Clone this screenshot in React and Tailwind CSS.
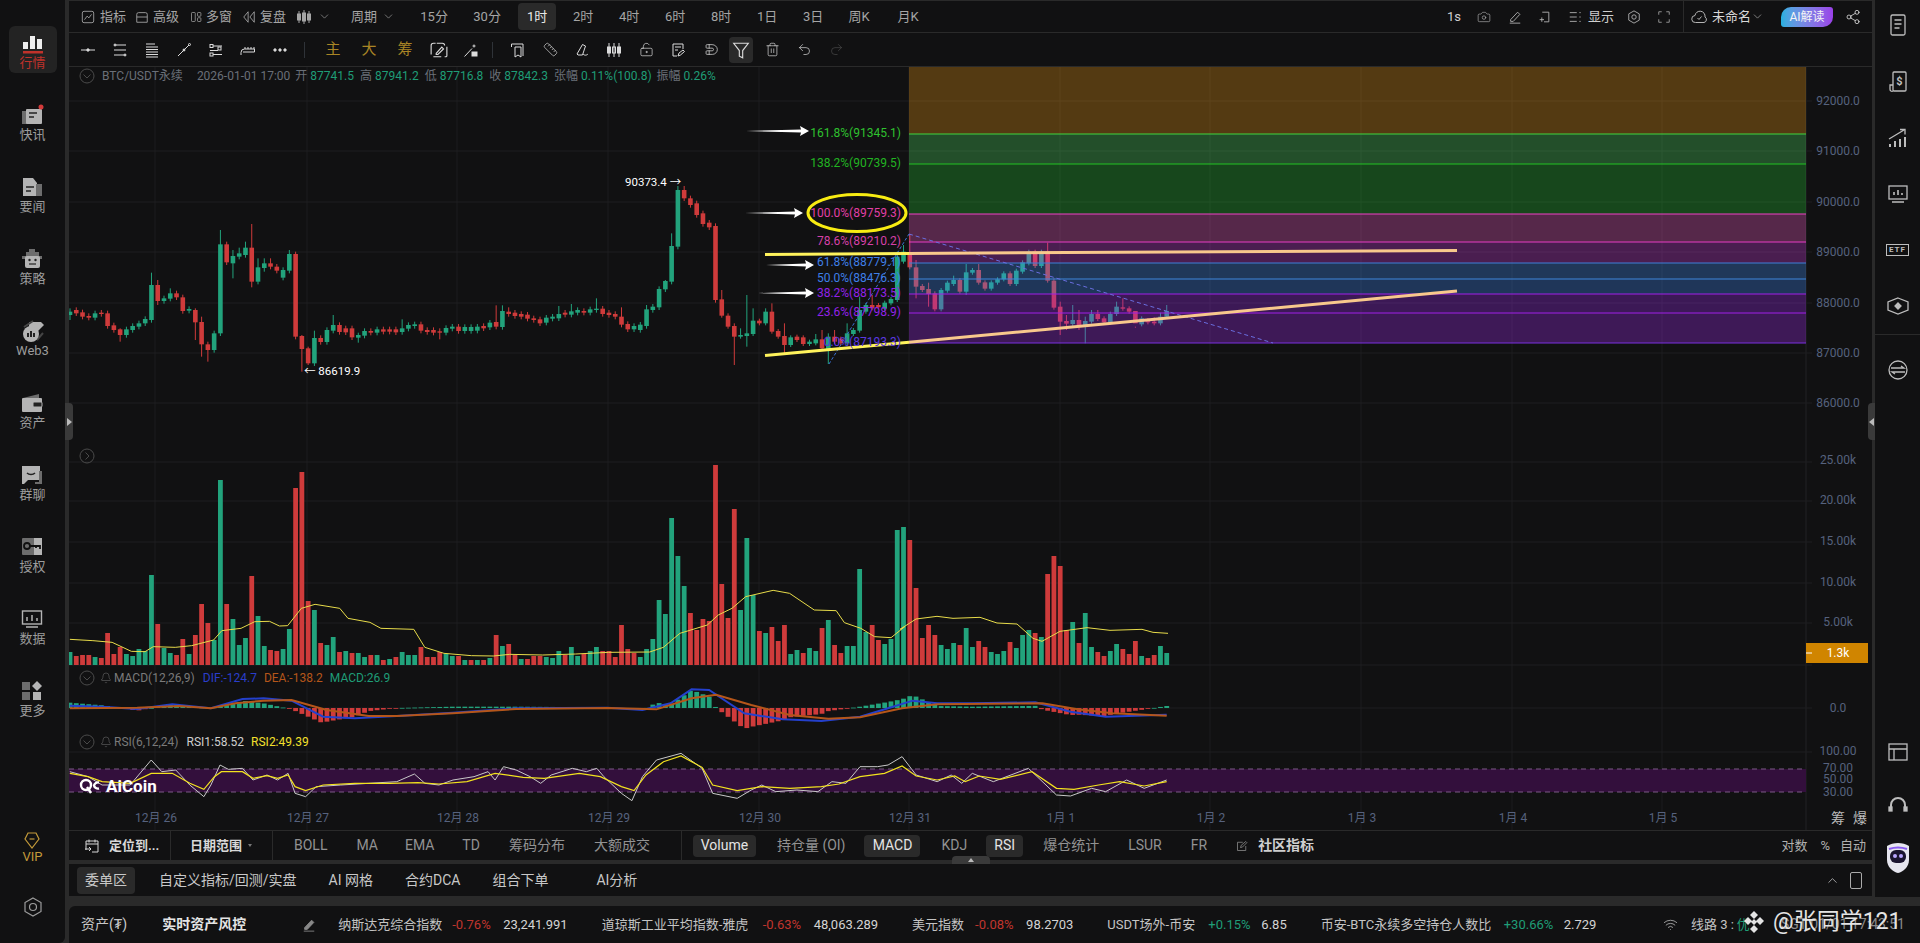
import React from "react";
import { Camera, Trash2, Undo2, Redo2, ChevronDown, ChevronUp, Ruler, LockKeyholeOpen, Share2, Bell, Wifi, Magnet } from "lucide-react";

const G = "#22a37c", R = "#cf3b3b";
const X = (i) => 70 + 6.267 * i;
const VG = [155, 307, 457, 608, 759, 909, 1060, 1210, 1361, 1512, 1662];

// [top, bottom, colour(0 green, 1 red), high, low] read from the picture
const A = [[335,345,0,325,360],[330,340,1],[337,350,1],[348,353,1],[340,353,0],[338,342,1,330],[340,378,1],[376,390,1],[388,405,1,385,425],[388,405,0],[378,390,0],[370,380,0],[357,370,0],[255,360,0,218],[255,303,1,240,315],[295,303,0],[280,296,0,265],[280,292,1],[292,333,1],[327,332,0],[330,367,1,325,420],[366,433,1,350,470],[433,450,1,425,485],[400,450,0],[133,400,0,90],[133,187,1,125],[168,190,0,150,235],[160,170,0,143],[143,165,0,125],[143,245,1,72,262],[202,245,0,175],[190,204,0,175,215],[190,200,1,175],[200,212,1],[210,233,0],[162,212,0,150],[162,410,1,155],[408,447,1,405,515],[445,490,1,440,495],[414,490,0,392],[414,426,1],[390,426,0],[375,392,0,345],[375,396,1],[385,397,1],[385,412,1],[405,413,0,398,428],[393,407,0],[393,398,1],[388,398,0],[388,395,1],[388,395,1],[388,397,1],[385,396,0,358],[375,386,0],[373,378,0],[373,392,1],[390,396,1],[390,398,1],[394,398,1,385,418],[384,398,0],[380,386,0],[380,393,1],[381,393,0],[381,393,0],[380,392,0],[378,385,1],[368,382,0],[366,380,1,316],[333,381,0,316],[335,342,1,322],[338,348,1],[342,350,1],[344,356,1],[355,360,1],[358,370,1],[353,368,0],[350,356,0],[342,355,0,318],[338,344,1],[334,344,0,312],[330,338,0],[333,338,1],[328,338,0],[326,330,0,295],[326,342,1,318],[338,345,1],[342,350,1],[350,374,1,322],[372,388,1],[378,388,0],[374,390,0],[328,378,0,315],[320,330,0],[267,322,0],[243,268,0,240],[138,245,0,100],[-30,140,0,-42,148],[-30,-5,1,-42],[-5,15,1],[10,45,1],[40,72,1,32],[68,82,1],[78,300,1]];
// same for the second part of the run, other scale
const B = [[568,617,1,540],[617,650,1,610],[648,680,1,640,765],[675,680,0,655],[670,678,0,555,710],[632,672,0,595],[632,640,1],[605,640,0,595],[605,665,1,580],[663,680,1],[678,705,1,640,730],[682,705,0],[680,690,1],[682,702,1],[695,702,0],[688,700,0,672],[688,715,1,660],[680,720,0,670,762],[680,695,1,660],[686,700,1],[670,700,0,640],[660,672,0],[600,662,0,560],[585,605,0],[585,595,1,555],[585,592,1],[578,596,0],[567,580,0],[440,570,0,425],[425,455,0,405],[430,472,1,372],[472,530,1,450,565],[528,540,1],[537,552,1,518,590],[550,598,1],[540,598,0],[518,542,0],[510,522,0,497],[510,545,1],[487,545,0,462,555],[480,488,0],[480,518,1,462],[517,536,1],[517,536,0],[508,518,0],[490,508,0],[490,522,1],[482,522,0],[457,485,0],[425,460,0],[425,468,1],[425,468,0],[425,512,1,398],[512,593,1,505],[590,635,1,575,675],[633,641,1,615,660],[630,642,0,585],[630,645,1,600,660],[633,645,0,620,700],[612,635,0,600],[612,627,1,600],[625,637,1],[612,637,0,605],[590,612,0,575],[592,596,1,565],[595,605,1],[603,640,1,650],[625,643,0],[630,637,1],[635,640,1,622],[620,640,0,608],[603,620,0,585]];
const Candles = [
  ...A.map(([t, b, c, h, l]) => [200 + t / 3, 200 + b / 3, c, 200 + (h ?? t - 8) / 3, 200 + (l ?? b + 8) / 3]),
  ...B.map(([t, b, c, h, l]) => [110 + t / 3, 110 + b / 3, c, 110 + (h ?? t - 6) / 3, 110 + (l && l > b ? l : b + 6) / 3]),
];
const V = [[636,0],[648,1],[645,1],[645,1],[651,0],[654,1],[579,1],[642,1],[621,1],[642,0],[648,0],[627,0],[633,0],[405,0],[552,1],[624,0],[639,0],[645,1],[597,1],[642,0],[585,1],[492,1],[549,1],[600,0],[120,0],[492,1],[537,0],[615,0],[594,0],[408,1],[528,0],[618,0],[630,1],[633,1],[627,0],[567,0],[144,1],[96,1],[483,1],[510,0],[609,1],[615,0],[591,0],[636,1],[633,0],[639,1],[639,0],[651,0],[645,1],[645,0],[660,1],[657,0],[651,1],[636,0],[645,0],[645,0],[621,1],[651,1],[651,1],[636,1],[642,0],[648,0],[648,1],[660,0],[660,1],[660,0],[660,1],[654,0],[585,1],[618,0],[612,1],[645,1],[657,0],[657,1],[648,1],[648,1],[651,0],[654,0],[633,0],[645,1],[621,0],[648,0],[642,1],[633,0],[621,0],[633,1],[633,1],[651,1],[555,1],[627,1],[639,1],[651,0],[627,0],[597,0],[480,0],[522,0],[234,0],[348,0],[438,0],[519,1],[570,1],[537,1],[543,1],[75,1],[432,1],[534,1],[207,1],[510,0],[294,0],[465,0],[573,1],[579,0],[561,1],[603,1],[555,1],[642,0],[630,0],[639,1],[624,0],[633,0],[564,1],[540,0],[615,1],[639,1],[618,0],[618,0],[387,0],[576,0],[555,1],[600,1],[612,0],[597,0],[270,0],[261,0],[300,1],[444,1],[594,1],[555,1],[585,1],[615,0],[627,0],[609,0],[615,1],[564,0],[621,0],[603,1],[621,1],[636,0],[642,0],[633,0],[606,1],[624,0],[585,0],[570,0],[579,1],[591,0],[402,1],[348,1],[378,1],[570,1],[546,0],[609,1],[519,0],[621,0],[636,1],[648,1],[633,0],[612,0],[627,1],[642,1],[603,1],[648,0],[654,1],[645,1],[618,0],[639,0]];
const MA = [[18,598],[60,602],[95,607],[130,634],[155,635],[170,620],[210,622],[240,617],[280,600],[295,572],[330,565],[355,545],[382,544],[400,558],[415,557],[440,505],[465,493],[510,505],[525,535],[565,547],[585,565],[645,568],[665,622],[700,640],[750,647],[790,648],[820,643],[880,645],[940,642],[1000,637],[1075,636],[1100,622],[1130,580],[1180,555],[1200,525],[1225,505],[1250,470],[1300,451],[1330,460],[1375,510],[1415,512],[1430,548],[1460,565],[1485,590],[1515,593],[1540,560]].map(([x, y]) => [60 + x / 1.823, 440 + y / 3]).concat([[900,568],[916,537],[937,529],[953,535],[980,532],[997,549],[1017,552],[1033,595],[1042,604],[1060,574],[1087,563],[1110,571],[1142,568],[1153,577],[1168,580]].map(([x, y]) => [x, 440 + y / 3]));
const DIF = [[14,137],[60,140],[110,147],[160,133],[215,145],[260,117],[290,115],[330,122],[375,170],[420,175],[480,168],[560,158],[650,145],[780,143],[830,150],[870,130],[900,88],[925,90],[975,160],[1030,178],[1085,183],[1140,170],[1180,145],[1215,122],[1250,130],[1300,130],[1390,127],[1440,155],[1490,170],[1577,164]];
const DEA = [[14,145],[110,143],[170,138],[215,145],[250,130],[290,122],[330,120],[380,150],[440,168],[480,168],[560,160],[650,147],[780,144],[850,148],[900,115],[935,104],[985,135],[1040,165],[1095,176],[1140,172],[1200,145],[1250,133],[1400,130],[1450,148],[1500,160],[1577,167]];
const R1 = [[14,335],[40,350],[60,375],[100,375],[130,300],[145,335],[165,330],[185,375],[205,410],[215,375],[228,315],[240,328],[260,325],[275,360],[295,345],[310,360],[325,340],[335,400],[350,410],[365,380],[400,375],[440,370],[480,365],[505,342],[520,370],[540,375],[560,360],[590,350],[610,335],[620,360],[632,320],[650,330],[670,350],[685,370],[700,345],[730,325],[750,335],[765,325],[775,350],[800,400],[815,422],[830,350],[850,300],[885,280],[915,325],[930,400],[965,415],[985,390],[1000,375],[1020,395],[1050,390],[1080,395],[1100,365],[1120,370],[1140,320],[1165,320],[1180,315],[1200,290],[1220,345],[1250,365],[1270,345],[1285,370],[1300,340],[1330,365],[1380,325],[1420,405],[1440,408],[1470,385],[1490,395],[1520,360],[1545,385],[1577,360]];
const R2 = [[14,340],[40,350],[60,365],[100,370],[130,340],[160,340],[185,370],[205,388],[220,350],[230,335],[260,335],[275,355],[295,347],[310,355],[325,345],[335,380],[350,392],[375,375],[420,370],[470,370],[510,368],[540,372],[580,365],[620,340],[660,352],[690,355],[740,340],[770,350],[800,380],[818,392],[835,345],[860,305],[885,288],[915,322],[930,375],[965,392],[1000,380],[1040,385],[1085,380],[1110,372],[1140,350],[1175,340],[1200,318],[1220,348],[1250,360],[1275,348],[1290,365],[1310,348],[1340,358],[1385,335],[1420,385],[1445,388],[1480,375],[1510,365],[1545,378],[1577,365]];
const z9 = ([x, y]) => [60 + x / 1.425, 660 + y / 3];
const pts = (a) => a.map((p) => p.join(",")).join(" ");
const lerp = (a, vx) => {
  for (let i = 1; i < a.length; i++) if (vx <= a[i][0]) { const t = (vx - a[i - 1][0]) / (a[i][0] - a[i - 1][0]); return a[i - 1][1] + t * (a[i][1] - a[i - 1][1]); }
  return a[a.length - 1][1];
};

const BANDS = [
  [67, 134, "#f39a14"], [134, 164, "#50e064"], [164, 214, "#28c836"], [214, 242, "#fa61cc"], [242, 263, "#cf40e0"],
  [263, 279, "#4696ff"], [279, 294, "#4290ff"], [294, 313, "#a32ff4"], [313, 343, "#aa2ffa"],
];
const LEVELS = [
  [134, "#3fd63f", "161.8%(91345.1)", "#2fc22f"], [164, "#22c422", "138.2%(90739.5)", "#22b522"], [214, "#ee40c4", "100.0%(89759.3)", "#e23fa6"],
  [242, "#e83cc4", "78.6%(89210.2)", "#d640a8"], [263, "#3f7fd8", "61.8%(88779.1)", "#3f7fe8"], [279, "#3f86dc", "50.0%(88476.3)", "#3f7fe8"],
  [294, "#a020e8", "38.2%(88173.5)", "#9322e8"], [313, "#a020e8", "23.6%(87798.9)", "#9322e8"], [343, "#7a30e0", "0.0%(87193.3)", "#5b38e0"],
];

const Pane = ({ y, h, children }) => (
  <svg width="1803" height={h} viewBox={`69 ${y} 1803 ${h}`} className="block">
    {VG.map((x) => <line key={x} x1={x} x2={x} y1={y} y2={y + h} stroke="#1c1c1e" />)}
    <line x1="1806" x2="1806" y1={y} y2={y + h} stroke="#232325" />
    {children}
  </svg>
);
const HL = ({ y }) => <line x1="69" x2="1812" y1={y} y2={y} stroke="#1e1e20" />;
const Lab = ({ y, children, x = 1838 }) => <text x={x} y={y} textAnchor="middle" dominantBaseline="central" fontSize="12" fill="#56627e">{children}</text>;
const Arrow = ({ x1, x2, y }) => <polygon fill="#fff" points={`${x1},${y} ${x2 - 8},${y - 1.5} ${x2 - 9},${y - 5} ${x2},${y} ${x2 - 9},${y + 5} ${x2 - 8},${y + 1.5}`} />;

const Toggle = ({ open }) => (
  <svg width="16" height="16" viewBox="0 0 16 16" fill="none" stroke="#4a4a4a">
    <circle cx="8" cy="8" r="7" />
    <path d={open ? "M4.5 6.5 8 10l3.5-3.5" : "M6.5 4.5 10 8l-3.5 3.5"} />
  </svg>
);

const PriceChart = () => (
  <Pane y={67} h={378}>
    {[101, 151, 202, 252, 303, 353, 403].map((y) => <HL key={y} y={y} />)}
    {[["92000.0", 101], ["91000.0", 151], ["90000.0", 202], ["89000.0", 252], ["88000.0", 303], ["87000.0", 353], ["86000.0", 403]].map(([t, y]) => <Lab key={t} y={y}>{t}</Lab>)}
    {Candles.map(([t, b, c, h, l], i) => (
      <g key={i} fill={c ? R : G}>
        <rect x={X(i) - 0.5} y={h} width="1" height={Math.max(l - h, 1)} />
        <rect x={X(i) - 2.3} y={t} width="4.6" height={Math.max(b - t, 1)} />
      </g>
    ))}
    {BANDS.map(([a, b, c]) => <rect key={a} x="909" y={a} width="897" height={b - a} fill={c} fillOpacity="0.3" />)}
    {LEVELS.map(([y, c]) => <line key={y} x1="909" x2="1806" y1={y} y2={y} stroke={c} />)}
    <path d="M829 364 909 234" stroke="#3b73d8" strokeDasharray="3 2" fill="none" />
    <path d="M909 234 1273 343" stroke="#6a6ee0" strokeDasharray="4 3" fill="none" />
    <path d="M765 254.5 909 253.4" stroke="#fff35c" strokeWidth="3" />
    <path d="M909 253.4 1457 250.5" stroke="#f8c88c" strokeWidth="3" />
    <path d="M765 355.6 909 342.3" stroke="#fff35c" strokeWidth="3" />
    <path d="M909 342.3 1457 291" stroke="#f8c88c" strokeWidth="3" />
    {LEVELS.map(([y, , t, c]) => <text key={t} x="901" y={y - 1} textAnchor="end" dominantBaseline="central" fontSize="12" fill={c}>{t}</text>)}
    <ellipse cx="857" cy="213" rx="49" ry="18.5" fill="none" stroke="#f8ec12" strokeWidth="3" />
    <Arrow x1={746} x2={809} y={131} />
    <Arrow x1={745} x2={803} y={213} />
    <Arrow x1={766} x2={814} y={265} />
    <Arrow x1={758} x2={814} y={293} />
    <text x="625" y="182" dominantBaseline="central" fontSize="11.5" fill="#fff">90373.4 →</text>
    <text x="304" y="371" dominantBaseline="central" fontSize="11.5" fill="#fff">← 86619.9</text>
  </Pane>
);

const VolumeChart = () => (
  <Pane y={445} h={225}>
    {[462, 501, 542, 583, 623, 665].map((y) => <HL key={y} y={y} />)}
    {[["25.00k", 460], ["20.00k", 500], ["15.00k", 541], ["10.00k", 582], ["5.00k", 622]].map(([t, y]) => <Lab key={t} y={y}>{t}</Lab>)}
    {V.map(([t, c], i) => <rect key={i} x={X(i) - 2.4} y={440 + t / 3} width="4.8" height={(675 - t) / 3} fill={c ? R : G} />)}
    <polyline points={pts(MA)} fill="none" stroke="#e8dc4a" />
    <rect x="1806" y="643" width="62" height="20" fill="#d08500" />
    <line x1="1806" x2="1812" y1="653" y2="653" stroke="#fff" />
    <text x="1838" y="653" textAnchor="middle" dominantBaseline="central" fontSize="12" fill="#fff">1.3k</text>
  </Pane>
);

const MacdChart = () => (
  <Pane y={670} h={63}>
    <HL y={708} />
    <Lab y={708}>0.0</Lab>
    {V.map((_, i) => {
      const vx = (X(i) - 60) * 1.425;
      const d = ((lerp(DEA, vx) - lerp(DIF, vx)) * 2) / 3;
      return <rect key={i} x={X(i) - 2.4} y={d > 0 ? 708 - d : 708} width="4.8" height={Math.max(Math.abs(d), 0.8)} fill={d > 0 ? G : R} />;
    })}
    <polyline points={pts(DIF.map(z9))} fill="none" stroke="#2440cc" strokeWidth="2" />
    <polyline points={pts(DEA.map(z9))} fill="none" stroke="#b5561a" strokeWidth="2" />
  </Pane>
);

const RsiChart = () => (
  <Pane y={733} h={72}>
    <HL y={752} />
    <rect x="69" y="769" width="1737" height="23" fill="#330f3c" />
    <line x1="69" x2="1806" y1="769" y2="769" stroke="#7d5a86" strokeDasharray="5 4" />
    <line x1="69" x2="1806" y1="792" y2="792" stroke="#7d5a86" strokeDasharray="5 4" />
    <Lab y={751}>100.00</Lab>
    <Lab y={768}>70.00</Lab>
    <Lab y={779}>50.00</Lab>
    <Lab y={792}>30.00</Lab>
    <polyline points={pts(R1.map(z9))} fill="none" stroke="#c8c8c8" />
    <polyline points={pts(R2.map(z9))} fill="none" stroke="#f2e21e" strokeWidth="1.2" />
  </Pane>
);

const XAxis = () => (
  <Pane y={805} h={25}>
    {["12月 26", "12月 27", "12月 28", "12月 29", "12月 30", "12月 31", "1月 1", "1月 2", "1月 3", "1月 4", "1月 5"].map((t, i) => <Lab key={t} x={VG[i] + 1} y={818}>{t}</Lab>)}
    <text x="1838" y="818" textAnchor="middle" dominantBaseline="central" fontSize="14" fill="#bbb">筹</text>
    <text x="1860" y="818" textAnchor="middle" dominantBaseline="central" fontSize="14" fill="#bbb">爆</text>
  </Pane>
);

const Ic = ({ s = 16, c = "", children, sw = 1 }) => (
  <svg width={s} height={s} viewBox="0 0 16 16" fill="none" stroke="currentColor" strokeWidth={sw} className={`shrink-0 ${c}`}>{children}</svg>
);

const Cell = ({ children }) => <span className="w-[32px] flex justify-center shrink-0 text-[#dcdcdc]">{children}</span>;

const Row1 = () => (
  <div className="h-[33px] border-t border-b border-[#2a2a2a] flex items-center text-[13px] text-[#a5a5a5] shrink-0">
    <Ic s={14} c="ml-[12px]"><rect x="1.5" y="1.5" width="13" height="13" rx="2" /><path d="m4 11 3-4 2 2 3-4" /></Ic>
    <span className="ml-[5px]">指标</span>
    <Ic s={14} c="ml-[9px]"><path d="M2 14V5a2 2 0 0 1 2-2h8a2 2 0 0 1 2 2v9zM2 8h12" /></Ic>
    <span className="ml-[4px]">高级</span>
    <Ic s={12} c="ml-[11px]"><rect x="2" y="2" width="5" height="12" rx="1" /><rect x="10" y="2" width="4.5" height="5" rx="1" /><rect x="10" y="9" width="4.5" height="5" rx="1" /></Ic>
    <span className="ml-[4px]">多窗</span>
    <Ic s={14} c="ml-[10px]"><path d="M7 2 2 8l5 6V2zM14 2 9 8l5 6V2z" /></Ic>
    <span className="ml-[4px]">复盘</span>
    <Ic s={16} c="ml-[10px]"><path d="M3 2v12M8 1v14M13 2v12" /><rect x="1.5" y="5" width="3" height="6" fill="currentColor" /><rect x="6.5" y="4" width="3" height="8" fill="currentColor" /><rect x="11.5" y="5" width="3" height="6" fill="currentColor" /></Ic>
    <ChevronDown size={13} strokeWidth={1.2} className="ml-[6px]" />
    <span className="ml-[20px]">周期</span>
    <ChevronDown size={13} strokeWidth={1.2} className="ml-[5px]" />
    <span className="ml-[16px] w-[46px] text-center">15分</span>
    <span className="ml-[7px] w-[46px] text-center">30分</span>
    <span className="ml-[8px] w-[38px] h-[27px] rounded bg-[#2a2a2a] text-[#e8e8e8] flex items-center justify-center">1时</span>
    <span className="ml-[4px] w-[46px] text-center">2时</span>
    <span className="w-[46px] text-center">4时</span>
    <span className="w-[46px] text-center">6时</span>
    <span className="w-[46px] text-center">8时</span>
    <span className="w-[46px] text-center">1日</span>
    <span className="w-[46px] text-center">3日</span>
    <span className="w-[46px] text-center">周K</span>
    <span className="ml-[3px] w-[46px] text-center">月K</span>
    <div className="ml-auto flex items-center h-full text-[#b5b5b5]">
      <span className="text-[#d0d0d0]">1s</span>
      <Camera size={14} strokeWidth={1.1} className="ml-[16px]" />
      <Ic s={14} c="ml-[17px]"><path d="M3 11 11 2.5l2.5 2.5L6 13H3zM2 15h12" /></Ic>
      <Ic s={14} c="ml-[15px]"><path d="M6 2.5h7.5v11H8M3 11h5M5.5 8.5v5" /></Ic>
      <Ic s={14} c="ml-[17px]"><path d="M2 3h8M2 8h8M2 13h8M13 3h1.5M13 8h1.5M13 13h1.5" /></Ic>
      <span className="ml-[6px] text-[#cfcfcf]">显示</span>
      <Ic s={14} c="ml-[13px]"><path d="m8 1 6 3.4v7.2L8 15l-6-3.4V4.4z" /><circle cx="8" cy="8" r="2.5" /></Ic>
      <Ic s={12} c="ml-[17px]"><path d="M1 5V1h4M11 1h4v4M15 11v4h-4M5 15H1v-4" /></Ic>
      <div className="ml-[13px] h-full border-l border-[#2a2a2a]" />
      <Ic s={16} c="ml-[7px]"><path d="M4.5 13.5a3.5 3.5 0 0 1-.5-7A5 5 0 0 1 14 8a3 3 0 0 1-1 5.5z" /><path d="m6.5 9 1.5 1.5 2.5-3" /></Ic>
      <span className="ml-[5px] text-[#d8d8d8]">未命名</span>
      <ChevronDown size={13} strokeWidth={1.2} />
      <span className="ml-[17px] w-[52px] h-[20px] rounded-tl-[10px] rounded-br-[10px] rounded-tr-[3px] rounded-bl-[3px] bg-gradient-to-r from-[#22b0e0] to-[#9a40e8] text-[#f4f4f4] text-[12px] flex items-center justify-center">AI解读</span>
      <Share2 size={16} strokeWidth={1.2} className="ml-[12px] mr-[11px] text-[#e0e0e0]" />
    </div>
  </div>
);

const Row2 = () => (
  <div className="h-[34px] border-b border-[#2a2a2a] flex items-center shrink-0">
    <div className="ml-[3px] flex items-center">
      <Cell><Ic><path d="M1 8h14" /><circle cx="8" cy="8" r="1.2" fill="currentColor" /></Ic></Cell>
      <Cell><Ic><path d="M2 3h12M2 8h12M2 13h12" /><circle cx="3" cy="3" r="1" /><circle cx="13" cy="13" r="1" /></Ic></Cell>
      <Cell><Ic><path d="M2 2h9M2 5h12M2 7.5h12M2 10h12M2 12.5h12M2 15h12" /></Ic></Cell>
      <Cell><Ic><path d="m2 14 11-11" /><circle cx="8" cy="8" r="1" fill="currentColor" /><circle cx="13.5" cy="2.5" r="1" /></Ic></Cell>
      <Cell><Ic><rect x="2" y="2.5" width="3" height="3" /><rect x="10" y="5" width="3" height="3" /><rect x="2" y="11" width="3" height="3" /><path d="M5 4h9M2 8.5h8M5 12.5h9" /></Ic></Cell>
      <Cell><Ic><path d="M1 13v-2.5A3.5 3.5 0 0 1 4.5 7h10v3H3" /><path d="M5 5v2M8 5v2M11 5v2M14 5v2" /></Ic></Cell>
      <Cell><Ic><circle cx="3" cy="8" r="1.2" fill="currentColor" /><circle cx="8" cy="8" r="1.2" fill="currentColor" /><circle cx="13" cy="8" r="1.2" fill="currentColor" /></Ic></Cell>
    </div>
    <div className="ml-[8px] w-px h-[16px] bg-[#2f3338]" />
    <span className="ml-[10px] w-[36px] text-center text-[15px] text-[#a98525]">主</span>
    <span className="w-[36px] text-center text-[15px] text-[#a98525]">大</span>
    <span className="w-[36px] text-center text-[15px] text-[#a98525]">筹</span>
    <Cell><Ic s={18}><path d="M5 2H3a2 2 0 0 0-2 2v8M13 14h1a1 1 0 0 0 1-1V5M3 14h7M6 2h5a2 2 0 0 1 2 2" /><path d="m5.5 11 5-5.5 1.5 1.5-5 5H5.5z" /></Ic></Cell>
    <Cell><Ic><path d="m1.5 14.5 7.5-8" /><circle cx="11" cy="4" r="1" /><rect x="9" y="10" width="5" height="4" fill="currentColor" /></Ic></Cell>
    <div className="ml-[5px] w-px h-[16px] bg-[#2f3338]" />
    <div className="ml-[9px] flex items-center">
      <Cell><Ic><path d="M1.5 5V2H13v12" /><path d="M5 5h6v10l-3-2-3 2z" /></Ic></Cell>
      <Cell><Ruler size={15} strokeWidth={1.1} /></Cell>
      <Cell><Ic><path d="m3 12 5.5-9.5 3 1.5-3 9H4z" /><path d="M9 12c2 2 4 1 5 0" /></Ic></Cell>
      <Cell><Ic><path d="M3 1v14M8 1v14M13 1v14" /><rect x="1.5" y="5" width="3" height="6" fill="currentColor" /><rect x="6.5" y="5" width="3" height="6" /><rect x="11.5" y="5" width="3" height="6" fill="currentColor" /></Ic></Cell>
      <Cell><LockKeyholeOpen size={15} strokeWidth={1.1} /></Cell>
      <Cell><Ic><path d="M13 7V2H3v12h4" /><path d="M5 5h6M5 8h3M8 14l1-3 4-3 1.5 1.5-4 3.5z" /></Ic></Cell>
      <Cell><Magnet size={15} strokeWidth={1.1} className="rotate-[45deg]" /></Cell>
    </div>
    <span className="ml-[3px] w-[24px] h-[26px] rounded bg-[#2a2a2a] text-[#dcdcdc] flex items-center justify-center">
      <Ic s={18}><path d="M1.5 2h13L9.5 8.5V15l-3-1.5v-5z" /></Ic>
    </span>
    <div className="ml-[3px] flex items-center">
      <Cell><Trash2 size={15} strokeWidth={1.1} /></Cell>
      <Cell><Undo2 size={15} strokeWidth={1.1} /></Cell>
      <Cell><Redo2 size={15} strokeWidth={1.1} className="text-[#4a4a4a]" /></Cell>
    </div>
  </div>
);

const Legend = ({ top, children }) => <div className={`absolute left-[10px] flex items-center text-[12px] leading-4 whitespace-nowrap ${top}`}>{children}</div>;

const Main = () => (
  <main className="w-[1803px] flex flex-col bg-[#111112]">
    <Row1 />
    <Row2 />
    <div className="relative h-[763px] shrink-0">
      <PriceChart />
      <VolumeChart />
      <MacdChart />
      <RsiChart />
      <XAxis />
      <Legend top="top-[1px]">
        <Toggle open />
        <span className="ml-[7px] text-[#6a6f78]">BTC/USDT永续</span>
        <span className="ml-[14px] text-[#6a6f78]">2026-01-01 17:00</span>
        <span className="ml-[5px] text-[#6a6f78]">开</span><span className="ml-[3px] text-[#1f9d77]">87741.5</span>
        <span className="ml-[6px] text-[#6a6f78]">高</span><span className="ml-[3px] text-[#1f9d77]">87941.2</span>
        <span className="ml-[6px] text-[#6a6f78]">低</span><span className="ml-[3px] text-[#1f9d77]">87716.8</span>
        <span className="ml-[6px] text-[#6a6f78]">收</span><span className="ml-[3px] text-[#1f9d77]">87842.3</span>
        <span className="ml-[6px] text-[#6a6f78]">张幅</span><span className="ml-[3px] text-[#1f9d77]">0.11%(100.8)</span>
        <span className="ml-[5px] text-[#6a6f78]">振幅</span><span className="ml-[3px] text-[#1f9d77]">0.26%</span>
      </Legend>
      <Legend top="top-[381px]"><Toggle /></Legend>
      <Legend top="top-[603px]">
        <Toggle open />
        <Bell size={12} strokeWidth={1} className="ml-[5px] text-[#777]" />
        <span className="ml-[2px] text-[#7a7a7a]">MACD(12,26,9)</span>
        <span className="ml-[8px] text-[#2a3ecb]">DIF:-124.7</span>
        <span className="ml-[7px] text-[#b5561a]">DEA:-138.2</span>
        <span className="ml-[7px] text-[#1f9d77]">MACD:26.9</span>
      </Legend>
      <Legend top="top-[667px]">
        <Toggle open />
        <Bell size={12} strokeWidth={1} className="ml-[5px] text-[#777]" />
        <span className="ml-[2px] text-[#7a7a7a]">RSI(6,12,24)</span>
        <span className="ml-[8px] text-[#cfcfcf]">RSI1:58.52</span>
        <span className="ml-[7px] text-[#f4e02c]">RSI2:49.39</span>
      </Legend>
      <div className="absolute left-[10px] top-[709px] flex items-center gap-[5px] text-white font-bold text-[17px] leading-5">
        <svg width="22" height="16" viewBox="0 0 22 16" fill="none" stroke="#fff" strokeWidth="2.4">
          <circle cx="7" cy="7" r="5" />
          <path d="m8 9 4 6" />
          <path d="M20 4.5a4 4 0 0 0-5 3 4 4 0 0 0 5 3" />
        </svg>
        <span>AiCoin</span>
      </div>
      <span className="absolute left-[-4px] top-[336px] w-[8px] h-[37px] rounded-r bg-[#3a3a3a] flex items-center justify-center">
        <span className="border-y-[4px] border-l-[5px] border-y-transparent border-l-[#bbb]" />
      </span>
      <span className="absolute right-[-3px] top-[336px] w-[7px] h-[37px] rounded-l bg-[#3a3a3a] flex items-center justify-center">
        <span className="border-y-[4px] border-r-[5px] border-y-transparent border-r-[#bbb]" />
      </span>
    </div>
    <BottomBar />
    <div className="h-[4px] bg-[#2a2a2a] shrink-0 relative">
      <span className="absolute left-[883px] top-[-4px] w-[38px] h-[8px] rounded-t bg-[#3a3a3a] flex items-center justify-center">
        <span className="border-x-[3px] border-b-[4px] border-x-transparent border-b-[#bbb]" />
      </span>
    </div>
    <OrderBar />
  </main>
);

const BottomBar = () => (
  <div className="h-[30px] border-t border-[#2a2a2a] flex items-center text-[14px] text-[#929292] shrink-0">
    <div className="w-[102px] h-full border-r border-[#2a2a2a] flex items-center text-[#d8d8d8] font-bold text-[13px]">
      <Ic s={16} c="ml-[15px]"><path d="M2 12V3h12v11H8M2 6h12M5 1.5v3M11 1.5v3M1 11h6M5 9l2 2-2 2" /></Ic>
      <span className="ml-[9px]">定位到...</span>
    </div>
    <div className="w-[102px] h-full border-r border-[#2a2a2a] flex items-center text-[#d8d8d8] font-bold text-[13px] pl-[19px]">
      <span>日期范围</span>
      <span className="ml-[6px] border-x-[2px] border-t-[3px] border-x-transparent border-t-[#777]" />
    </div>
    <span className="ml-[21px]">BOLL</span>
    <span className="ml-[29px]">MA</span>
    <span className="ml-[27px]">EMA</span>
    <span className="ml-[28px]">TD</span>
    <span className="ml-[29px]">筹码分布</span>
    <span className="ml-[29px]">大额成交</span>
    <div className="ml-[31px] h-full border-l border-[#2a2a2a]" />
    <span className="ml-[11px] w-[63px] h-[22px] rounded bg-[#2a2a2a] text-[#e4e4e4] flex items-center justify-center">Volume</span>
    <span className="ml-[21px]">持仓量 (OI)</span>
    <span className="ml-[19px] w-[56px] h-[22px] rounded bg-[#2a2a2a] text-[#e4e4e4] flex items-center justify-center">MACD</span>
    <span className="ml-[21px]">KDJ</span>
    <span className="ml-[19px] w-[37px] h-[22px] rounded bg-[#2a2a2a] text-[#e4e4e4] flex items-center justify-center">RSI</span>
    <span className="ml-[20px]">爆仓统计</span>
    <span className="ml-[29px]">LSUR</span>
    <span className="ml-[29px]">FR</span>
    <Ic s={12} c="ml-[29px]"><path d="M13 8v6H2V3h7M6 10l1-3 6-5 1.5 1.5-6 6z" /></Ic>
    <span className="ml-[10px] font-bold text-[#cfcfcf]">社区指标</span>
    <div className="ml-auto mr-[6px] flex items-center text-[13px] text-[#b0b0b0]">
      <span>对数</span>
      <span className="ml-[13px]">%</span>
      <span className="ml-[10px]">自动</span>
    </div>
  </div>
);

const OrderBar = () => (
  <div className="h-[33px] flex items-center text-[14px] text-[#c8c8c8] shrink-0 border-b border-[#2a2a2a]">
    <span className="ml-[8px] w-[58px] h-[27px] rounded bg-[#2a2a2a] flex items-center justify-center">委单区</span>
    <span className="ml-[24px]">自定义指标/回测/实盘</span>
    <span className="ml-[32px]">AI 网格</span>
    <span className="ml-[32px]">合约DCA</span>
    <span className="ml-[32px]">组合下单</span>
    <span className="ml-[48px]">AI分析</span>
    <div className="ml-auto mr-[10px] flex items-center">
      <ChevronUp size={15} strokeWidth={1.2} />
      <span className="ml-[10px] w-[12px] h-[17px] border border-[#aaa] rounded-[2px]" />
    </div>
  </div>
);

const Tick = ({ n, p, v, up, nw, pw }) => (
  <div className="flex gap-[10px] items-center whitespace-nowrap">
    <span className={`text-[#c4c4c4] ${nw}`}>{n}</span>
    <span className={`${pw} ${up ? "text-[#1f9d77]" : "text-[#c0352e]"}`}>{p}</span>
    <span className="text-[#d4d4d4]">{v}</span>
  </div>
);

const Footer = () => (
  <footer className="relative h-[37px] rounded-tl-md bg-[#111112] flex items-center text-[13px]">
    <span className="ml-[12px] text-[#c8c8c8] text-[14px]">资产(₮)</span>
    <span className="ml-[35px] text-[#e4e4e4] text-[14px] font-bold">实时资产风控</span>
    <Ic s={14} c="ml-[56px] text-[#888]"><path d="M3 11 11 2.5l2.5 2.5L6 13H3z" fill="currentColor" /><path d="M2 15h12" /></Ic>
    <div className="ml-[22px] flex gap-[34px]">
      <Tick n="纳斯达克综合指数" p="-0.76%" v="23,241.991" nw="w-[104px]" pw="w-[41px]" />
      <Tick n="道琼斯工业平均指数-雅虎" p="-0.63%" v="48,063.289" nw="w-[151px]" pw="w-[41px]" />
      <Tick n="美元指数" p="-0.08%" v="98.2703" nw="w-[53px]" pw="w-[41px]" />
      <Tick n="USDT场外-币安" p="+0.15%" v="6.85" up nw="w-[91px]" pw="w-[43px]" />
      <Tick n="币安-BTC永续多空持仓人数比" p="+30.66%" v="2.729" up nw="w-[173px]" pw="w-[50px]" />
    </div>
    <div className="ml-auto mr-[15px] flex items-center text-[#c4c4c4]">
      <Wifi size={15} strokeWidth={1.2} />
      <span className="ml-[13px]">线路 3 :</span>
      <span className="ml-[3px] text-[#1f9d77]">优</span>
      <span className="ml-[31px] text-[14px] text-[#8a8a8a]">SGT 01/01 17:43:51</span>
    </div>
    <div className="absolute left-[1675px] top-[1px] flex items-center gap-[9px] text-[23px] leading-[30px] text-[#e4e4e4]">
      <svg width="20" height="22" viewBox="0 0 20 22" fill="#e4e4e4">
        <path d="m10 0 4 4-4 4-4-4zM4 6l4 4-4 4-4-4zM16 6l4 4-4 4-4-4zM10 8l3 3-3 3-3-3zM10 14l4 4-4 4-4-4z" />
      </svg>
      <span>@张同学121</span>
    </div>
  </footer>
);

const S = ({ children }) => <svg width="24" height="24" viewBox="0 0 24 24" className="shrink-0">{children}</svg>;
const L = "#b4b4b4", D = "#6d6d6d";
const NAV = [
  ["快讯", <S><rect x="2" y="8" width="8" height="13" fill={D} /><rect x="6" y="6" width="16" height="15" rx="1" fill={L} /><path d="M9 10h8M9 14h5" stroke="#222" strokeWidth="1.5" /><circle cx="21" cy="4" r="2.5" fill="#d33a3a" /></S>],
  ["要闻", <S><path d="M3 3h10l4 5v13H3z" fill={L} /><path d="M16 9h6v12h-6z" fill={D} /><path d="M6 12h8M6 16h5" stroke="#222" strokeWidth="1.5" /></S>],
  ["策略", <S><rect x="9" y="2" width="6" height="3" fill={D} /><rect x="6" y="5" width="13" height="4" fill={D} /><rect x="2" y="9" width="20" height="3" fill={D} /><rect x="5" y="9" width="15" height="12" rx="2" fill={L} /><circle cx="9.5" cy="13" r="1.2" fill="#222" /><circle cx="15.5" cy="13" r="1.2" fill="#222" /><path d="M9 17h7" stroke="#222" strokeWidth="1.2" /></S>],
  ["Web3", <S><path d="M8 3h12l3 3-7 7H8z" fill={L} /><path d="M3 8 12 2M22 14l-6 7" stroke="#444" strokeWidth="2" /><circle cx="10" cy="15" r="8" fill={L} /><path d="M7 14v4M10 12v6M13 14v4" stroke="#222" strokeWidth="2" /></S>],
  ["资产", <S><path d="M3 7 19 3v4z" fill={D} /><rect x="2" y="7" width="20" height="14" rx="1" fill={L} /><rect x="13" y="11" width="9" height="5" rx="1" fill="#222" stroke={L} /></S>],
  ["群聊", <S><path d="M2 3h18v14H8l-4 4H2z" fill={L} /><path d="M19 8h3v13h-7v-2h4z" fill={D} /><path d="M7 10c2 2 6 2 8 0" stroke="#222" strokeWidth="1.5" fill="none" /></S>],
  ["授权", <S><rect x="2" y="3" width="20" height="17" rx="1" fill={D} /><path d="M14 3h8v17h-8z" fill={L} /><circle cx="7" cy="11" r="3" fill="none" stroke="#111" strokeWidth="1.8" /><path d="M10 11h10v3M16 11v2" stroke="#111" strokeWidth="1.8" fill="none" /></S>],
  ["数据", <S><rect x="2.5" y="4" width="19" height="13" fill="none" stroke={L} strokeWidth="1.4" /><path d="M7 10v4M12 8v6M17 11v3" stroke={L} strokeWidth="1.5" /><path d="M6 20h12" stroke={L} strokeWidth="1.5" /></S>],
  ["更多", <S><rect x="2" y="3" width="8" height="8" fill={D} /><path d="m17 2 5 5-5 5-5-5z" fill={L} /><rect x="2" y="13" width="8" height="8" fill={D} /><rect x="13" y="13" width="8" height="8" fill={L} /></S>],
];

const Sidebar = () => (
  <aside className="w-[65px] h-full rounded-br-md bg-[#111112] flex flex-col items-center text-[13px] leading-4 text-[#9c9c9c] shrink-0">
    <div className="mt-[26px] mb-[25px] w-[48px] h-[47px] rounded-md bg-[#232323] flex flex-col items-center pt-[5px] text-[#c0322b]">
      <svg width="24" height="24" viewBox="0 0 24 24" className="shrink-0">
        <rect x="2" y="11" width="5" height="7" fill="#eee" /><rect x="9" y="5" width="5" height="13" fill="#eee" /><rect x="16" y="8" width="5" height="10" fill="#eee" />
        <rect x="2" y="20" width="20" height="2.5" fill="#c0322b" />
      </svg>
      <span>行情</span>
    </div>
    {NAV.map(([t, ic]) => (
      <div key={t} className="mb-[25px] h-[47px] flex flex-col items-center pt-[5px]">
        {ic}
        <span>{t}</span>
      </div>
    ))}
    <div className="mt-auto flex flex-col items-center text-[#c39a3a]">
      <svg width="18" height="18" viewBox="0 0 18 18" fill="none" stroke="currentColor" strokeWidth="1.2">
        <path d="M5 2h8l3 6-7 9-7-9z" /><path d="M6.5 8h5" />
      </svg>
      <span>VIP</span>
    </div>
    <svg width="20" height="20" viewBox="0 0 20 20" fill="none" stroke="#9c9c9c" strokeWidth="1.2" className="mt-[32px] mb-[26px]">
      <path d="m10 1 8 4.5v9L10 19l-8-4.5v-9z" /><circle cx="10" cy="10" r="3.5" />
    </svg>
  </aside>
);

const RB = ({ mt, children, s = 24 }) => <svg width={s} height={s} viewBox="0 0 24 24" fill="none" stroke="#bdbdbd" strokeWidth="1.3" className={`shrink-0 ${mt}`}>{children}</svg>;

const RightBar = () => (
  <aside className="ml-[3px] w-[45px] bg-[#111112] flex flex-col items-center shrink-0">
    <RB mt="mt-[13px]"><rect x="5" y="2" width="14" height="20" rx="1.5" /><path d="M8.5 7h7M8.5 11h7M8.5 15h5" /></RB>
    <RB mt="mt-[33px]"><rect x="7" y="2" width="13" height="19" rx="1" /><path d="M7 15H4v4a2 2 0 0 0 3 2" /><text x="13.5" y="15" textAnchor="middle" fontSize="11" fontWeight="bold" stroke="none" fill="#bdbdbd">$</text></RB>
    <RB mt="mt-[32px]"><path d="M3 13 18 4M14 3.5h5v5" /><path d="M4 21v-3M9 21v-6M14 21v-8M19 21V11" strokeWidth="2" /></RB>
    <RB mt="mt-[32px]"><rect x="3" y="4" width="18" height="13" /><path d="M8 13v-3M12 13V8M16 13v-2M6 20h12" strokeWidth="1.6" /></RB>
    <div className="mt-[32px] h-[24px] flex items-center">
      <span className="text-[8px] leading-[10px] font-bold border border-[#bdbdbd] text-[#bdbdbd] px-[2px] tracking-[1px]">ETF</span>
    </div>
    <RB mt="mt-[32px]"><path d="m12 4 10 4v8l-10 4-10-4V8z" /><path d="m12 9 3 3-3 3-3-3z" fill="#bdbdbd" /></RB>
    <div className="mt-[16px] w-full border-t border-[#2a2a2a]" />
    <RB mt="mt-[23px]"><circle cx="12" cy="12" r="9" /><path d="M5 10h13l-3-2M19 14H6l3 2" /></RB>
    <RB mt="mt-[358px]"><rect x="3" y="4" width="18" height="16" /><path d="M3 9h18M8 9v11" /></RB>
    <RB mt="mt-[30px]"><path d="M5 15V11a7 7 0 0 1 14 0v4" strokeWidth="2" /><rect x="3" y="13" width="3" height="4" fill="#bdbdbd" /><rect x="18" y="13" width="3" height="4" fill="#bdbdbd" /></RB>
    <svg width="28" height="32" viewBox="0 0 28 32" className="mt-[24px] shrink-0">
      <path d="M3 4c6-4 16-4 22 0v14c0 7-6 12-11 13C9 30 3 25 3 18z" fill="#e6e6ef" />
      <rect x="6" y="8" width="16" height="13" rx="6" fill="#1b1530" />
      <circle cx="11" cy="14" r="2" fill="#b9a6ff" /><circle cx="17" cy="14" r="2" fill="#b9a6ff" />
      <path d="M5 7c6-2 12-2 18 0" stroke="#8a5cf0" strokeWidth="2" fill="none" />
    </svg>
  </aside>
);

export default function App() {
  return (
    <div className="flex w-[1920px] h-[943px] overflow-hidden bg-[#2a2a2a] font-['Roboto','Noto_Sans_CJK_SC',sans-serif]">
      <Sidebar />
      <div className="ml-[4px] flex flex-col flex-1 min-w-0">
        <div className="flex h-[897px] shrink-0">
          <Main />
          <RightBar />
        </div>
        <div className="h-[9px] shrink-0" />
        <Footer />
      </div>
    </div>
  );
}
